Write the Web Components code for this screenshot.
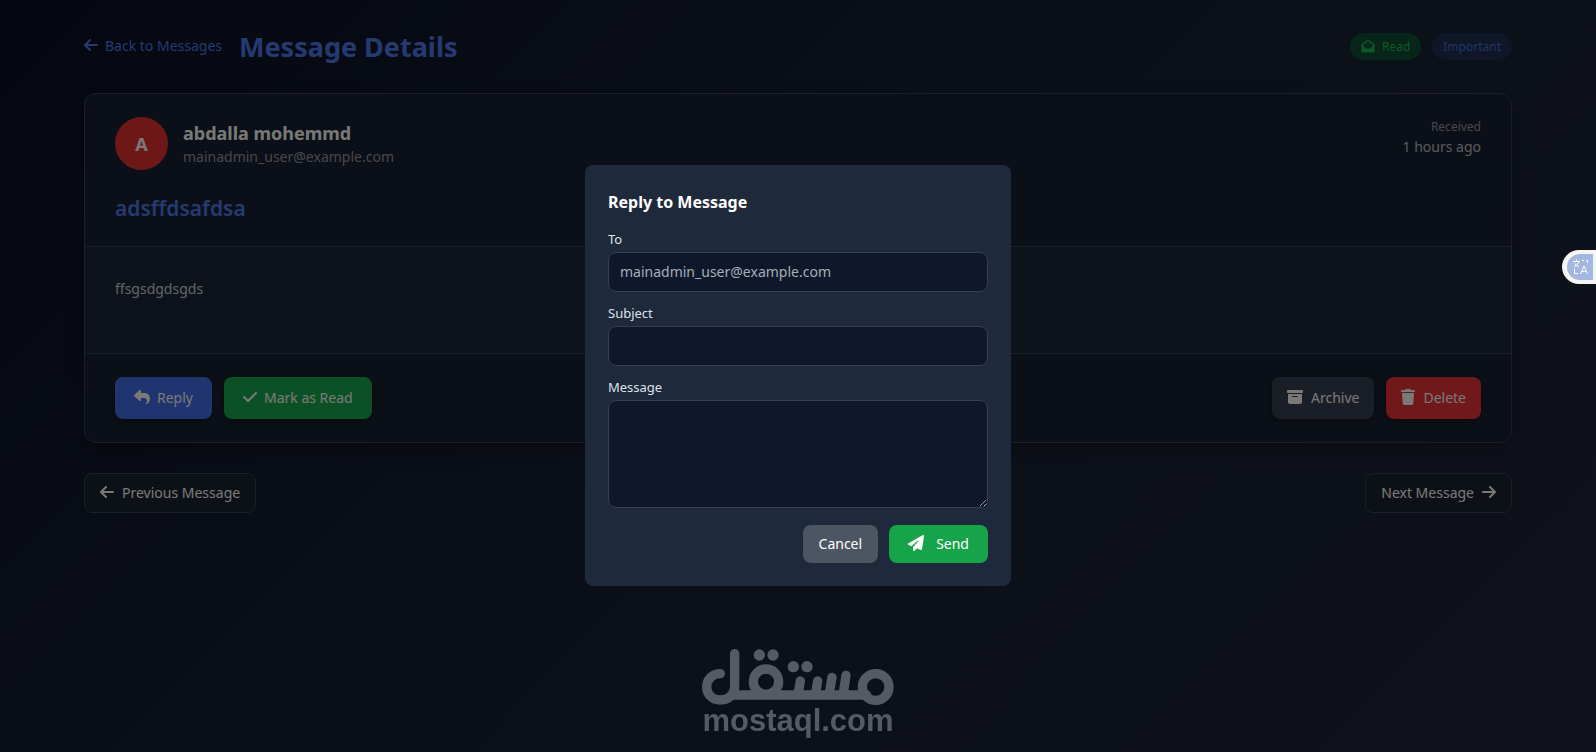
<!DOCTYPE html>
<html lang="en">
<head>
<meta charset="utf-8">
<meta name="viewport" content="width=device-width, initial-scale=1">
<title>Message Details</title>
<style>
  html, body { margin: 0; min-height: 100%; }
  body {
    --royal: #4a74e0;
    --line: #363f4e;
    --muted: #8d9199;
    --text: #f2f2f0;
    min-height: 100vh;
    background: linear-gradient(135deg, #0a1022 0%, #172030 50%, #1e2436 100%);
    color: var(--text);
    font: 14px/24px "Noto Sans", "Open Sans", sans-serif;
  }
</style>
</head>
<body>
<message-page></message-page>
<site-watermark></site-watermark>
<reply-dialog></reply-dialog>
<translate-tab></translate-tab>

<script>
const ICONS = {
  left: [448, 'M9.4 233.4c-12.5 12.5-12.5 32.8 0 45.3l160 160c12.5 12.5 32.8 12.5 45.3 0s12.5-32.8 0-45.3L109.2 288 416 288c17.7 0 32-14.3 32-32s-14.3-32-32-32l-306.7 0L214.6 118.6c12.5-12.5 12.5-32.8 0-45.3s-32.8-12.5-45.3 0l-160 160z'],
  right: [448, 'M438.6 278.6c12.5-12.5 12.5-32.8 0-45.3l-160-160c-12.5-12.5-32.8-12.5-45.3 0s-12.5 32.8 0 45.3L338.8 224 32 224c-17.7 0-32 14.3-32 32s14.3 32 32 32l306.7 0L233.4 393.4c-12.5 12.5-12.5 32.8 0 45.3s32.8 12.5 45.3 0l160-160z'],
  reply: [512, 'M205 34.8c11.5 5.1 19 16.6 19 29.2v64H336c97.2 0 176 78.8 176 176c0 113.3-81.5 163.9-100.2 174.1c-2.5 1.4-5.3 1.9-8.1 1.9c-10.9 0-19.7-8.9-19.7-19.7c0-7.5 4.3-14.4 9.8-19.5c9.4-8.8 22.2-26.4 22.2-56.7c0-53-43-96-96-96H224v64c0 12.6-7.4 24.1-19 29.2s-25 3-34.4-5.4l-160-144C3.9 225.7 0 217.1 0 208s3.9-17.7 10.6-23.8l160-144c9.4-8.5 22.9-10.6 34.4-5.4z'],
  check: [448, 'M438.6 105.4c12.5 12.5 12.5 32.8 0 45.3l-256 256c-12.5 12.5-32.8 12.5-45.3 0l-128-128c-12.5-12.5-12.5-32.8 0-45.3s32.8-12.5 45.3 0L160 338.7 393.4 105.4c12.5-12.5 32.8-12.5 45.3 0z'],
  archive: [512, 'M32 32H480c17.7 0 32 14.3 32 32V96c0 17.7-14.3 32-32 32H32C14.3 128 0 113.7 0 96V64C0 46.3 14.3 32 32 32zm0 128H480V416c0 35.3-28.7 64-64 64H96c-35.3 0-64-28.7-64-64V160zm128 80c0 8.8 7.2 16 16 16H336c8.8 0 16-7.2 16-16s-7.2-16-16-16H176c-8.8 0-16 7.2-16 16z'],
  trash: [448, 'M135.2 17.7L128 32H32C14.3 32 0 46.3 0 64S14.3 96 32 96H416c17.7 0 32-14.3 32-32s-14.3-32-32-32H320l-7.2-14.3C307.4 6.8 296.3 0 284.2 0H163.8c-12.1 0-23.2 6.8-28.6 17.7zM416 128H32L53.2 467c1.6 25.3 22.6 45 47.9 45H346.9c25.3 0 46.3-19.7 47.9-45L416 128z'],
  plane: [512, 'M498.1 5.6c10.1 7 15.4 19.1 13.5 31.2l-64 416c-1.5 9.7-7.4 18.2-16 23s-18.9 5.4-28 1.6L284 427.7l-68.5 74.1c-8.9 9.7-22.9 12.9-35.2 8.1S160 493.2 160 480V396.4c0-4 1.5-7.8 4.2-10.7L331.8 202.8c5.8-6.3 5.6-16-.4-22s-15.7-6.4-22-.7L106 360.8 17.7 316.6C7.1 311.3 .3 300.7 0 288.9s5.9-22.8 16.1-28.7l448-256c10.7-6.1 23.9-5.5 34 1.4z'],
  envelope: [512, 'M256 16 16 190V450q0 46 46 46H450q46 0 46-46V190ZM256 78 430 206V262L300 350Q256 378 212 350L82 262V206Z']
};

function define(name, html, init) {
  const template = document.createElement('template');
  template.innerHTML = html;
  customElements.define(name, class extends HTMLElement {
    constructor() {
      super();
      this.attachShadow({ mode: 'open' }).append(template.content.cloneNode(true));
    }
    connectedCallback() { if (init) init(this, this.shadowRoot); }
  });
}

define('ui-icon', `
<style>
  :host { display: inline-flex; flex: none; margin-bottom: 2px; }
  svg { display: block; height: var(--icon, 16px); fill: currentColor; }
</style>
<svg aria-hidden="true"><path fill-rule="evenodd"/></svg>`, (host, root) => {
  const [w, d] = ICONS[host.getAttribute('name')];
  root.querySelector('svg').setAttribute('viewBox', `0 0 ${w} 512`);
  root.querySelector('svg').style.aspectRatio = `${w} / 512`;
  root.querySelector('path').setAttribute('d', d);
});

define('ui-button', `
<style>
  :host { display: inline-flex; }
  button {
    display: inline-flex; align-items: center; gap: 8px;
    margin: 0; padding: 9px 15px; border: 0; border-radius: 8px;
    background: #343e4e; color: inherit; font: inherit; cursor: pointer;
    box-shadow: 0 2px 6px #0006;
  }
  :host([wide]) button { gap: 7px; padding-inline: 19px; }
  :host([compact]) button { padding: 7px 16px; box-shadow: none; }
  :host([compact][wide]) button { gap: 12px; padding-inline: 19px; }
  :host([tone="blue"]) button { background: #4069de; }
  :host([tone="green"]) button { background: #16a34a; }
  :host([tone="red"]) button { background: #e03034; }
  :host([tone="gray"]) button { background: #4d5562; }
  :host([tone="outline"]) button {
    padding: 7px 15px; background: #18232f; border: 1px solid var(--line); box-shadow: none;
  }
</style>
<button type="button"><slot></slot></button>`);

define('status-badge', `
<style>
  :host {
    display: inline-flex; align-items: center; gap: 7px;
    padding: 4px 11px; border-radius: 14px;
    font-size: 12px; line-height: 19px; --icon: 14px;
    background: #1c2c50; color: #4468cc;
  }
  :host([tone="green"]) { background: #0e4a30; color: #1cb050; }
</style>
<slot></slot>`);

define('message-card', `
<style>
  :host {
    display: block; border: 1px solid var(--line); border-radius: 12px;
    background: #172130; box-shadow: 0 8px 20px #0004; overflow: hidden;
  }
  header { padding: 23px 30px 22px; border-bottom: 1px solid var(--line); }
  .top { display: flex; justify-content: space-between; }
  .sender { display: flex; align-items: center; gap: 15px; }
  .avatar {
    display: grid; place-items: center; width: 53px; height: 53px;
    border-radius: 50%; background: #dc2f2f; font-size: 18px; font-weight: 700;
  }
  h2, h3, p { margin: 0; }
  h2 { padding-top: 2px; font-size: 18px; font-weight: 700; line-height: 24px; }
  .muted { color: var(--muted); }
  .received { text-align: right; }
  .small { font-size: 12px; line-height: 20px; }
  .time { color: #b4b6ba; line-height: 20px; }
  h3 { padding-top: 22px; font-size: 21px; line-height: 32px; font-weight: 600; color: var(--royal); }
  .body { padding: 30px; min-height: 46px; background: #1a2735; border-bottom: 1px solid var(--line); color: #c6c8cc; }
  footer { display: flex; justify-content: space-between; padding: 23px 30px; }
  .group { display: flex; gap: 12px; }
</style>
<header>
  <div class="top">
    <div class="sender">
      <div class="avatar">A</div>
      <div><h2>abdalla mohemmd</h2><p class="muted">mainadmin_user@example.com</p></div>
    </div>
    <div class="received"><p class="muted small">Received</p><p class="time">1 hours ago</p></div>
  </div>
  <h3>adsffdsafdsa</h3>
</header>
<div class="body"><p>ffsgsdgdsgds</p></div>
<footer>
  <div class="group">
    <ui-button tone="blue" wide><ui-icon name="reply"></ui-icon>Reply</ui-button>
    <ui-button tone="green" wide><ui-icon name="check"></ui-icon>Mark as Read</ui-button>
  </div>
  <div class="group">
    <ui-button><ui-icon name="archive"></ui-icon>Archive</ui-button>
    <ui-button tone="red"><ui-icon name="trash"></ui-icon>Delete</ui-button>
  </div>
</footer>`);

define('message-page', `
<style>
  :host { display: block; padding: 24px 84px; }
  .bar, .title, .badges { display: flex; align-items: center; }
  .bar, nav { display: flex; justify-content: space-between; }
  .bar { min-height: 45px; margin-bottom: 24px; }
  .title { gap: 17px; }
  .badges { gap: 11px; }
  a { display: inline-flex; align-items: center; gap: 7px; padding-bottom: 2px; color: var(--royal); text-decoration: none; }
  h1 { margin: 0; font-size: 27px; line-height: 44px; font-weight: 700; color: var(--royal); }
  nav { padding-top: 30px; }
</style>
<div class="bar">
  <div class="title">
    <a href="#messages"><ui-icon name="left"></ui-icon>Back to Messages</a>
    <h1>Message Details</h1>
  </div>
  <div class="badges">
    <status-badge tone="green"><ui-icon name="envelope"></ui-icon>Read</status-badge>
    <status-badge>Important</status-badge>
  </div>
</div>
<message-card></message-card>
<nav>
  <ui-button tone="outline"><ui-icon name="left"></ui-icon>Previous Message</ui-button>
  <ui-button tone="outline">Next Message<ui-icon name="right"></ui-icon></ui-button>
</nav>`);

define('form-field', `
<style>
  :host { display: block; }
  label { display: block; margin-bottom: 4px; font-size: 13px; line-height: 17px; color: #dde3ec; }
  input, textarea {
    display: block; box-sizing: border-box; width: 100%; height: 40px; margin: 0;
    padding: 7px 11px; border: 1px solid #334155; border-radius: 8px; outline: 0;
    background: #0f172a; color: #a5aebb; font: inherit;
  }
  textarea { height: 108px; resize: vertical; }
</style>
<label for="control"></label>`, (host, root) => {
  if (root.getElementById('control')) return;
  const control = document.createElement(host.hasAttribute('multiline') ? 'textarea' : 'input');
  control.id = 'control';
  control.value = host.getAttribute('value') || '';
  root.querySelector('label').textContent = host.getAttribute('label');
  root.append(control);
});

define('reply-dialog', `
<style>
  :host { position: fixed; inset: 0; display: grid; place-items: center; padding-bottom: 2px; background: rgba(0, 0, 0, .5); }
  section {
    box-sizing: border-box; width: min(426px, 92vw); padding: 23px;
    border-radius: 8px; background: #1e293b; color: #fff;
  }
  h2 { margin: 0; font-size: 16px; line-height: 28px; font-weight: 700; }
  form { display: grid; gap: 13px; padding-top: 15px; }
  .actions { display: flex; justify-content: flex-end; gap: 11px; padding-top: 4px; }
</style>
<section role="dialog" aria-modal="true" aria-labelledby="heading">
  <h2 id="heading">Reply to Message</h2>
  <form>
    <form-field label="To" value="mainadmin_user@example.com"></form-field>
    <form-field label="Subject"></form-field>
    <form-field label="Message" multiline></form-field>
    <div class="actions">
      <ui-button tone="gray" compact>Cancel</ui-button>
      <ui-button tone="green" compact wide><ui-icon name="plane"></ui-icon>Send</ui-button>
    </div>
  </form>
</section>`);

define('site-watermark', `
<style>
  :host {
    position: fixed; z-index: 1; left: 0; right: 0; bottom: 16px;
    display: flex; flex-direction: column; align-items: center;
    color: #555b63; pointer-events: none;
  }
  svg { display: block; width: 192px; height: 57px; }
  span { font: 700 31px/30px "Liberation Sans", sans-serif; }
</style>
<svg viewBox="66 57 576 171" fill="none" stroke="currentColor" stroke-width="28" stroke-linecap="round" aria-hidden="true">
  <path d="M121 131C98 131 80 148 80 171S98 210 121 210C146 210 164 193 164 168V71"/>
  <path d="M158 195H560"/>
  <circle cx="258" cy="155" r="38"/>
  <circle cx="587" cy="171" r="40"/>
  <path d="M361 153 355 190M413 153 407 190M456 142 448 190M498 136 490 190"/>
  <g fill="currentColor" stroke="none"><circle cx="238" cy="75" r="17"/><circle cx="279" cy="75" r="17"/><circle cx="340" cy="110" r="17"/><circle cx="381" cy="110" r="17"/></g>
</svg>
<span>mostaql.com</span>`);

define('translate-tab', `
<style>
  :host { position: fixed; z-index: 2; top: 250px; right: 0; }
  button {
    display: flex; justify-content: flex-end; margin: 0; padding: 4px 3px 4px 5px;
    border: 0; border-radius: 17px 0 0 17px; background: #f5f5f3;
  }
  svg { display: block; width: 26px; height: 26px; border-radius: 13px 0 0 13px; background: #a3b7e0; }
</style>
<button type="button" aria-label="Translate">
  <svg viewBox="0 0 26 26" fill="none" stroke="#fff" stroke-width="1" aria-hidden="true">
    <path d="M6 7.500H13M9.500 5.500V7.500M7 13Q11 11 12 7.500M7.500 9.500Q9.500 12 12 13M15 6.500H17M19 6.500H20.500V9M7.500 14.500V19.500H11M13.500 20 17 12 20.500 20M14.500 17.500H19.500"/>
  </svg>
</button>`);
</script>
</body>
</html>
